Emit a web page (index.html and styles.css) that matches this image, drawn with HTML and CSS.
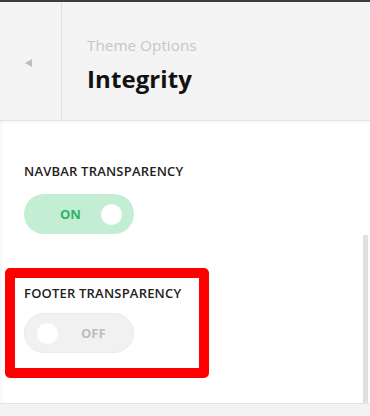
FILE: index.html
```html
<!DOCTYPE html>
<html>
<head>
<meta charset="utf-8">
<link rel="stylesheet" href="styles.css">
</head>
<body>
<div class="topline"></div>
<header class="header">
  <div class="back"><span class="tri"></span></div>
  <div class="titles">
    <div class="sub">Theme Options</div>
    <div class="title">Integrity</div>
  </div>
</header>
<main class="content">
  <section class="opt opt-first">
    <div class="label">NAVBAR TRANSPARENCY</div>
    <div class="toggle on"><span class="txt">ON</span><span class="knob"></span></div>
  </section>
  <section class="opt highlight">
    <div class="label">FOOTER TRANSPARENCY</div>
    <div class="toggle off"><span class="knob"></span><span class="txt">OFF</span></div>
  </section>
  <div class="scrollbar"></div>
</main>
<footer class="footer"></footer>
</body>
</html>
```
FILE: styles.css
```css
* { box-sizing: border-box; }
html, body { margin: 0; padding: 0; }
body {
  width: 370px;
  height: 416px;
  overflow: hidden;
  background: #fff;
  font-family: "Open Sans", "Noto Sans", sans-serif;
  display: flex;
  flex-direction: column;
}
.topline { height: 2px; background: #3a3f44; flex: none; }
.header {
  height: 119px;
  flex: none;
  background: #f4f4f4;
  border-bottom: 1px solid #e2e2e2;
  box-shadow: 0 1px 3px rgba(0,0,0,0.05);
  display: flex;
  position: relative;
  z-index: 1;
}
.back {
  width: 62px;
  border-right: 1px solid #e0e0e0;
  display: flex;
  align-items: center;
  justify-content: center;
  padding-right: 4px;
  padding-top: 4px;
}
.tri {
  width: 0; height: 0;
  border-top: 4px solid transparent;
  border-bottom: 4px solid transparent;
  border-right: 7px solid #bdbdbd;
}
.titles { padding: 33px 0 0 25px; }
.sub { font-size: 15.3px; color: #c6c6c6; line-height: 20px; }
.title { font-size: 24px; font-weight: 700; color: #111; line-height: 30px; margin-top: 9px; letter-spacing: 0.1px; }
.content {
  flex: 1;
  position: relative;
  box-shadow: inset 4px 0 4px -3px rgba(0,0,0,0.06);
}
.opt { padding-left: 24px; }
.opt-first { padding-top: 42px; height: 147px; }
.label { font-size: 13px; font-weight: 600; color: #222; line-height: 16px; letter-spacing: 0.2px; }
.toggle {
  margin-top: 15px;
  width: 110px;
  height: 40px;
  border-radius: 20px;
  display: flex;
  align-items: center;
  font-size: 13px;
  font-weight: 700;
}
.toggle.on { background: #c3eed3; color: #2bb46a; padding: 0 12px 0 36px; justify-content: space-between; }
.toggle.off { background: #f1f1f1; border: 1px solid #ebebeb; color: #bcbcbc; padding: 0 0 0 12px; }
.toggle.off .txt { margin-left: 23px; }
.knob { width: 21px; height: 21px; border-radius: 50%; background: #fff; }
.highlight {
  margin-left: 5px;
  width: 204px;
  height: 110px;
  border: 10px solid #ff0000;
  border-radius: 5px;
  padding: 7px 0 0 9px;
}
.highlight .toggle { margin-top: 12px; }
.scrollbar {
  position: absolute;
  right: 2px;
  top: 114px;
  bottom: 0;
  width: 5px;
  background: #e0e0e0;
}
.footer {
  height: 13px;
  flex: none;
  background: #f3f3f3;
  border-top: 1px solid #e4e4e4;
  position: relative;
}
```
